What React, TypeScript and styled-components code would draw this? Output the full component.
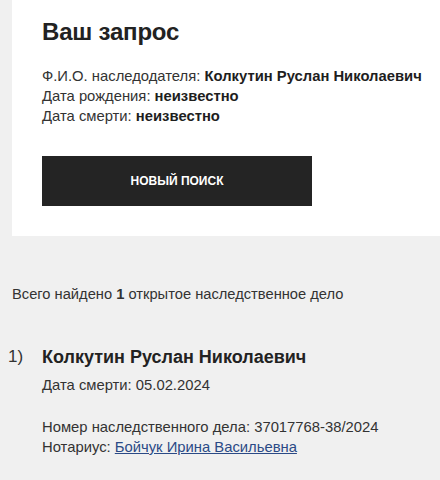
import styled, { createGlobalStyle } from 'styled-components';

const GlobalStyle = createGlobalStyle`
  html, body {
    margin: 0;
    padding: 0;
    background: #f0f0f0;
  }
  body {
    font-family: "Liberation Sans", Arial, sans-serif;
    color: #222;
  }
`;

const Page = styled.div`
  width: 440px;
  min-height: 480px;
  overflow: hidden;
`;

const RequestCard = styled.section`
  margin-left: 12px;
  background: #fff;
  padding: 18px 0 30px 30px;
`;

const Title = styled.h1`
  margin: 0;
  font-size: 24px;
  line-height: 28px;
  font-weight: 700;
  color: #222;
  letter-spacing: -0.2px;
`;

const InfoList = styled.div`
  margin-top: 20px;
  display: flex;
  flex-direction: column;
`;

const InfoLine = styled.div`
  font-size: 14.8px;
  line-height: 20px;
  color: #333;
  white-space: nowrap;

  b {
    color: #1e1e1e;
    font-weight: 700;
  }
`;

const SearchButton = styled.button`
  margin-top: 30px;
  width: 270px;
  height: 50px;
  border: none;
  background: #242424;
  color: #fff;
  font-family: inherit;
  font-size: 12px;
  font-weight: 700;
  text-transform: uppercase;
  cursor: pointer;
`;

const Summary = styled.p`
  margin: 48px 0 0 12px;
  font-size: 14.7px;
  line-height: 20px;
  color: #333;
`;

const ResultList = styled.ol`
  list-style: none;
  margin: 39px 0 0;
  padding: 0;
`;

const ResultItem = styled.li`
  display: grid;
  grid-template-columns: 42px 1fr;
`;

const ItemNumber = styled.span`
  padding-left: 8px;
  font-size: 17px;
  line-height: 28px;
  color: #333;
`;

const ItemBody = styled.div`
  display: flex;
  flex-direction: column;
`;

const ItemName = styled.h2`
  margin: 0;
  font-size: 18px;
  line-height: 28px;
  font-weight: 700;
  color: #222;
`;

const ItemLine = styled.div<{ $gap?: number }>`
  margin-top: ${p => p.$gap ?? 0}px;
  font-size: 14.8px;
  line-height: 20px;
  color: #333;
`;

const NotaryLink = styled.a`
  color: #2b4a86;
  text-decoration: underline;
`;

export default function App() {
  return (
    <Page>
      <GlobalStyle />
      <RequestCard>
        <Title>Ваш запрос</Title>
        <InfoList>
          <InfoLine>Ф.И.О. наследодателя: <b>Колкутин Руслан Николаевич</b></InfoLine>
          <InfoLine>Дата рождения: <b>неизвестно</b></InfoLine>
          <InfoLine>Дата смерти: <b>неизвестно</b></InfoLine>
        </InfoList>
        <SearchButton>Новый поиск</SearchButton>
      </RequestCard>

      <Summary>Всего найдено <b>1</b> открытое наследственное дело</Summary>

      <ResultList>
        <ResultItem>
          <ItemNumber>1)</ItemNumber>
          <ItemBody>
            <ItemName>Колкутин Руслан Николаевич</ItemName>
            <ItemLine $gap={4}>Дата смерти: 05.02.2024</ItemLine>
            <ItemLine $gap={22}>Номер наследственного дела: 37017768-38/2024</ItemLine>
            <ItemLine>
              Нотариус: <NotaryLink href="#">Бойчук Ирина Васильевна</NotaryLink>
            </ItemLine>
          </ItemBody>
        </ResultItem>
      </ResultList>
    </Page>
  );
}
